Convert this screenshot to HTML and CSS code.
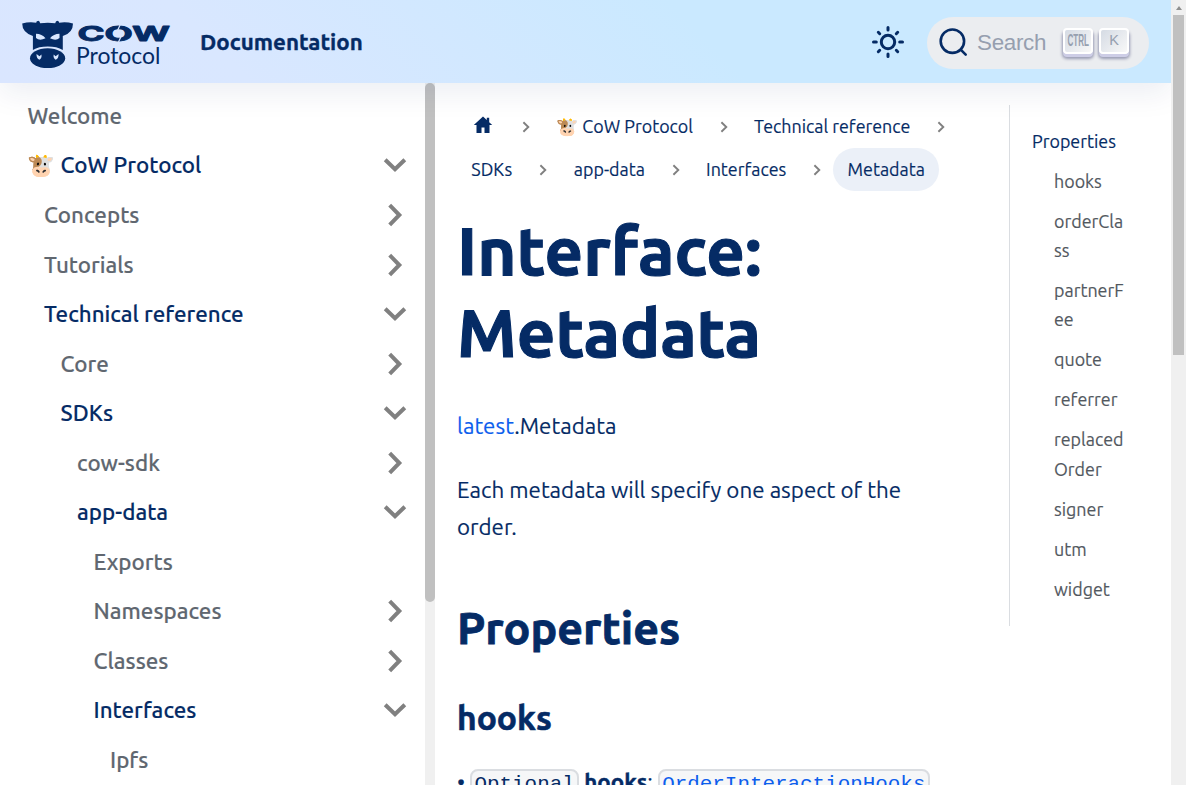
FILE: index.html
```html
<!DOCTYPE html>
<html lang="en">
<head>
<meta charset="utf-8">
<title>Interface: Metadata | CoW Protocol Documentation</title>
<link rel="stylesheet" href="styles.css">
</head>
<body>
<svg class="defs" aria-hidden="true">
  <symbol id="chev" viewBox="0 0 24 24"><path d="M6.700 2.200 16.300 12l-9.600 9.800" fill="none" stroke="#808080" stroke-width="4"/></symbol>
  <symbol id="sep" viewBox="0 0 12 12"><path d="M3.400 1.200 8.300 6l-4.900 4.800" fill="none" stroke="#808080" stroke-width="1.900"/></symbol>
</svg>
<div class="shell">
  <div class="page">
    <header class="navbar">
      <svg class="logo" viewBox="0 0 150 50" role="img" aria-label="CoW Protocol">
        <path fill="#052b65" d="M.2 3.500Q7 1.600 14.200 2.700 14 1.500 16.200.8q1.500 0 2 2.500 7.800-1.200 15 0 .5-2.500 2-2.500 2.200.7 2 1.900 7.200-1.100 13.800.8Q51 13 40.800 16V30Q35 26.600 25.800 26.600T10.900 30V16Q.2 12.500.2 3.500z"/>
        <ellipse cx="25.600" cy="38.200" rx="17.600" ry="9.900" fill="#052b65"/>
        <path fill="#d9e7ff" d="M14 13.800q6 .2 9.500 4.500-6 3-9.500-.3zM37.500 13.800q-6 .2-9.500 4.500 6 3 9.500-.3zM14.500 34q-.2 4.500 3 5.700 2.700-1.700 1.900-5.200l-1.900 1.800zM36.600 34q.2 4.500-3 5.700-2.700-1.700-1.900-5.200l1.900 1.800z"/>
        <text class="mark" x="55.500" y="20.900" textLength="92.500" lengthAdjust="spacingAndGlyphs">COW</text>
        <path d="m98.300 4.500-3 6.500M99.500 15.500l-3 6.500" stroke="#d9e7ff" stroke-width="1.200"/>
        <text class="sub" x="54" y="43.600" textLength="84.500" lengthAdjust="spacingAndGlyphs">Protocol</text>
      </svg>
      <a class="brand">Documentation</a>
      <svg class="sun" viewBox="0 0 34 34" fill="none" stroke="#052b65" stroke-width="3" stroke-linecap="round"><circle cx="17" cy="17" r="6.700"/><path d="M17 2.500v2.500M17 29v2.500M2.500 17h2.800M28.700 17h2.800M7.300 7.300l1.400 1.400M25.300 25.300l1.400 1.400M7.300 26.700l1.400-1.400M25.300 8.700l1.400-1.400"/></svg>
      <div class="search">
        <svg class="lens" viewBox="0 0 30 30" fill="none" stroke="#052b65" stroke-width="2.600" stroke-linecap="round"><circle cx="13.400" cy="13.200" r="11.700"/><path d="m21.700 21.700 5 5"/></svg>
        <span class="ph">Search</span>
        <kbd class="key"><svg viewBox="0 0 30 26"><text x="4.500" y="18" class="ctrl" textLength="21.500" lengthAdjust="spacingAndGlyphs">CTRL</text></svg></kbd>
        <kbd class="key">K</kbd>
      </div>
    </header>
    <div class="body">
      <aside class="side">
        <nav class="menu">
          <div class="row l0"><span>Welcome</span></div>
          <div class="row l0 on"><span>🐮 CoW Protocol</span><svg class="chev open"><use href="#chev"/></svg></div>
          <div class="row l1"><span>Concepts</span><svg class="chev"><use href="#chev"/></svg></div>
          <div class="row l1"><span>Tutorials</span><svg class="chev"><use href="#chev"/></svg></div>
          <div class="row l1 on"><span>Technical reference</span><svg class="chev open"><use href="#chev"/></svg></div>
          <div class="row l2"><span>Core</span><svg class="chev"><use href="#chev"/></svg></div>
          <div class="row l2 on"><span>SDKs</span><svg class="chev open"><use href="#chev"/></svg></div>
          <div class="row l3"><span>cow-sdk</span><svg class="chev"><use href="#chev"/></svg></div>
          <div class="row l3 on"><span>app-data</span><svg class="chev open"><use href="#chev"/></svg></div>
          <div class="row l4"><span>Exports</span></div>
          <div class="row l4"><span>Namespaces</span><svg class="chev"><use href="#chev"/></svg></div>
          <div class="row l4"><span>Classes</span><svg class="chev"><use href="#chev"/></svg></div>
          <div class="row l4 on"><span>Interfaces</span><svg class="chev open"><use href="#chev"/></svg></div>
          <div class="row l5"><span>Ipfs</span></div>
        </nav>
        <div class="side-track"><div class="side-thumb"></div></div>
      </aside>
      <main class="doc">
        <nav class="crumbs">
          <div class="crumb-row">
            <a class="crumb c-home"><svg class="home" viewBox="0 0 20 18"><path fill="#052b65" d="M10 .5.800 9h2.700v8h5v-5.500h3V17h5V9h2.700l-3-2.700V1.800h-2.400V4z"/></svg></a><svg class="sep"><use href="#sep"/></svg>
            <a class="crumb c-cow">🐮 CoW Protocol</a><svg class="sep"><use href="#sep"/></svg>
            <a class="crumb c-tech">Technical reference</a><svg class="sep"><use href="#sep"/></svg>
          </div>
          <div class="crumb-row">
            <a class="crumb c-sdk">SDKs</a><svg class="sep"><use href="#sep"/></svg>
            <a class="crumb c-app">app-data</a><svg class="sep"><use href="#sep"/></svg>
            <a class="crumb c-int">Interfaces</a><svg class="sep"><use href="#sep"/></svg>
            <a class="crumb c-meta">Metadata</a>
          </div>
        </nav>
        <h1>Interface:<br>Metadata</h1>
        <p><a class="link">latest</a>.Metadata</p>
        <p>Each metadata will specify one aspect of the<br>order.</p>
        <h2>Properties</h2>
        <h3>hooks</h3>
        <p class="sig">• <code>Optional</code> <b>hooks</b>: <code class="link">OrderInteractionHooks</code></p>
      </main>
      <aside class="toc">
        <div class="toc-in">
          <a class="top">Properties</a>
          <a>hooks</a><a>orderCla<br>ss</a><a>partnerF<br>ee</a><a>quote</a><a>referrer</a><a>replaced<br>Order</a><a>signer</a><a>utm</a><a>widget</a>
        </div>
      </aside>
    </div>
  </div>
  <div class="track"><div class="arrow"></div><div class="thumb"></div></div>
</div>
</body>
</html>
```
FILE: styles.css
```css
* { box-sizing: border-box; }
html, body { margin: 0; height: 785px; overflow: hidden; background: #fff; }
body { font-family: Ubuntu, "Noto Sans", "Noto Color Emoji", sans-serif; color: #052b65; font-size: 22.350px; -webkit-text-stroke: .15px; }
.defs { display: none; }
.shell { display: flex; height: 785px; }
.page { width: 1171px; overflow: hidden; display: flex; flex-direction: column; }

.navbar { height: 83px; flex: none; display: flex; align-items: center; padding: 0 22px; position: relative; z-index: 2;
  background: linear-gradient(45deg, #dae6ff 0%, #d9e7ff 20%, #cae9ff 60%); box-shadow: 0 10px 30px rgba(5, 43, 101, .08); }
.logo { width: 150px; height: 50px; margin-top: 7px; fill: #052b65; }
.mark { font: 700 20.500px Inter, sans-serif; stroke: #052b65; stroke-width: .9; stroke-linejoin: round; }
.sub { font: 400 23.500px Lato, sans-serif; }
.brand { font-weight: 700; -webkit-text-stroke: .35px; margin-left: 28px; margin-top: -1px; }
.sun { width: 34px; height: 34px; margin-left: auto; margin-top: 1px; }
.search { width: 222px; height: 52px; border-radius: 26px; background: #ebedf0; margin-left: 22px; margin-top: 3px; display: flex; align-items: center; padding-left: 12px; -webkit-text-stroke: 0; }
.lens { width: 30px; height: 30px; }
.ph { font: 22.400px/30px "Liberation Sans", sans-serif; color: #969faf; margin-left: 8px; width: 86px; letter-spacing: -.3px; }
.key { width: 30px; height: 26px; margin: -5px 6px 0 0; border-radius: 4px; border: 2px solid #fff; background: linear-gradient(-225deg, #d5dbe4, #f8f8f8);
  box-shadow: 0 3px 0 #cdcde6, 0 4px 3px 1px rgba(30, 35, 90, .4); font: 14.500px/20px "Liberation Sans", sans-serif; color: #969faf; text-align: center; flex: none; }
.key svg { display: block; width: 30px; height: 26px; margin: -2px 0 0 -2px; }
.ctrl { font: bold 16.500px "Liberation Sans", sans-serif; fill: #969faf; }

.body { display: flex; height: 702px; }
.side { width: 435px; flex: none; display: flex; overflow: hidden; }
.menu { width: 425px; padding-top: 8.200px; }
.row { height: 49.540px; display: flex; align-items: center; padding-right: 18px; color: #606770; font-weight: 500; line-height: 28px; }
.row.on { color: #052b65; }
.l0 { padding-left: 27.500px; } .l1 { padding-left: 44px; } .l2 { padding-left: 60.500px; }
.l3 { padding-left: 77px; } .l4 { padding-left: 93.500px; } .l5 { padding-left: 110px; }
.chev { width: 24px; height: 24px; margin-left: auto; }
.open { transform: rotate(90deg); }
.side-track { width: 10px; background: #f0f0f0; }
.side-thumb { height: 519px; background: #c0c0c0; border-radius: 5px; }

.doc { width: 574px; flex: none; padding: 22px 0 0 22px; white-space: nowrap; }
.crumbs { font-size: 17.880px; line-height: 28px; }
.crumb-row { display: flex; height: 43px; align-items: center; }
.crumb { height: 43px; flex: none; display: flex; align-items: center; justify-content: center; border-radius: 22px; padding-bottom: 1px; }
.home { width: 20px; height: 18px; margin-top: -2px; }
.sep { width: 12px; height: 12px; margin: 0 10.500px; flex: none; }
.c-home { width: 52px; } .c-cow { width: 165px; } .c-tech { width: 184.500px; }
.c-sdk { width: 69.500px; } .c-app { width: 99.700px; } .c-int { width: 108px; }
.c-meta { width: 106px; background: #ebf0f8; }
h1 { font-size: 67.200px; line-height: 82px; margin: 18px 0 35px; font-weight: 700; -webkit-text-stroke: 1.100px; }
p { margin: 0 0 27.400px; line-height: 36.960px; }
h2 { font-size: 44.800px; line-height: 55px; margin: 54px 0 42px; -webkit-text-stroke: .8px; }
h3 { font-size: 33.600px; line-height: 41px; margin: 0 0 26px; -webkit-text-stroke: .6px; }
b { -webkit-text-stroke: .4px; }
.link { color: #0d5eed; }
code { font: 20.900px/30px "Liberation Mono", monospace; background: #f6f7f8; border: 2px solid #dadde1; border-radius: 8px; padding: 2px 2.300px; -webkit-text-stroke: 0; }

.toc { padding-top: 22px; }
.toc-in { height: 521px; width: 140px; border-left: 1px solid #dadde1; padding: 22px 0 0 44px; font-size: 17.880px; line-height: 29.200px; color: #525860; }
.toc-in a { display: block; margin-bottom: 10.800px; }
.toc-in .top { color: #052b65; margin-left: -22px; }

.track { width: 15px; background: #f0f0f0; padding: 10px 2px 0; }
.arrow { width: 0; height: 0; border: solid transparent; border-width: 0 3.500px 4px; border-bottom-color: #8f8f8f; margin: -4px auto 5px; }
.thumb { width: 11px; height: 340px; margin-top: 5px; background: #c0c0c0; }
```
